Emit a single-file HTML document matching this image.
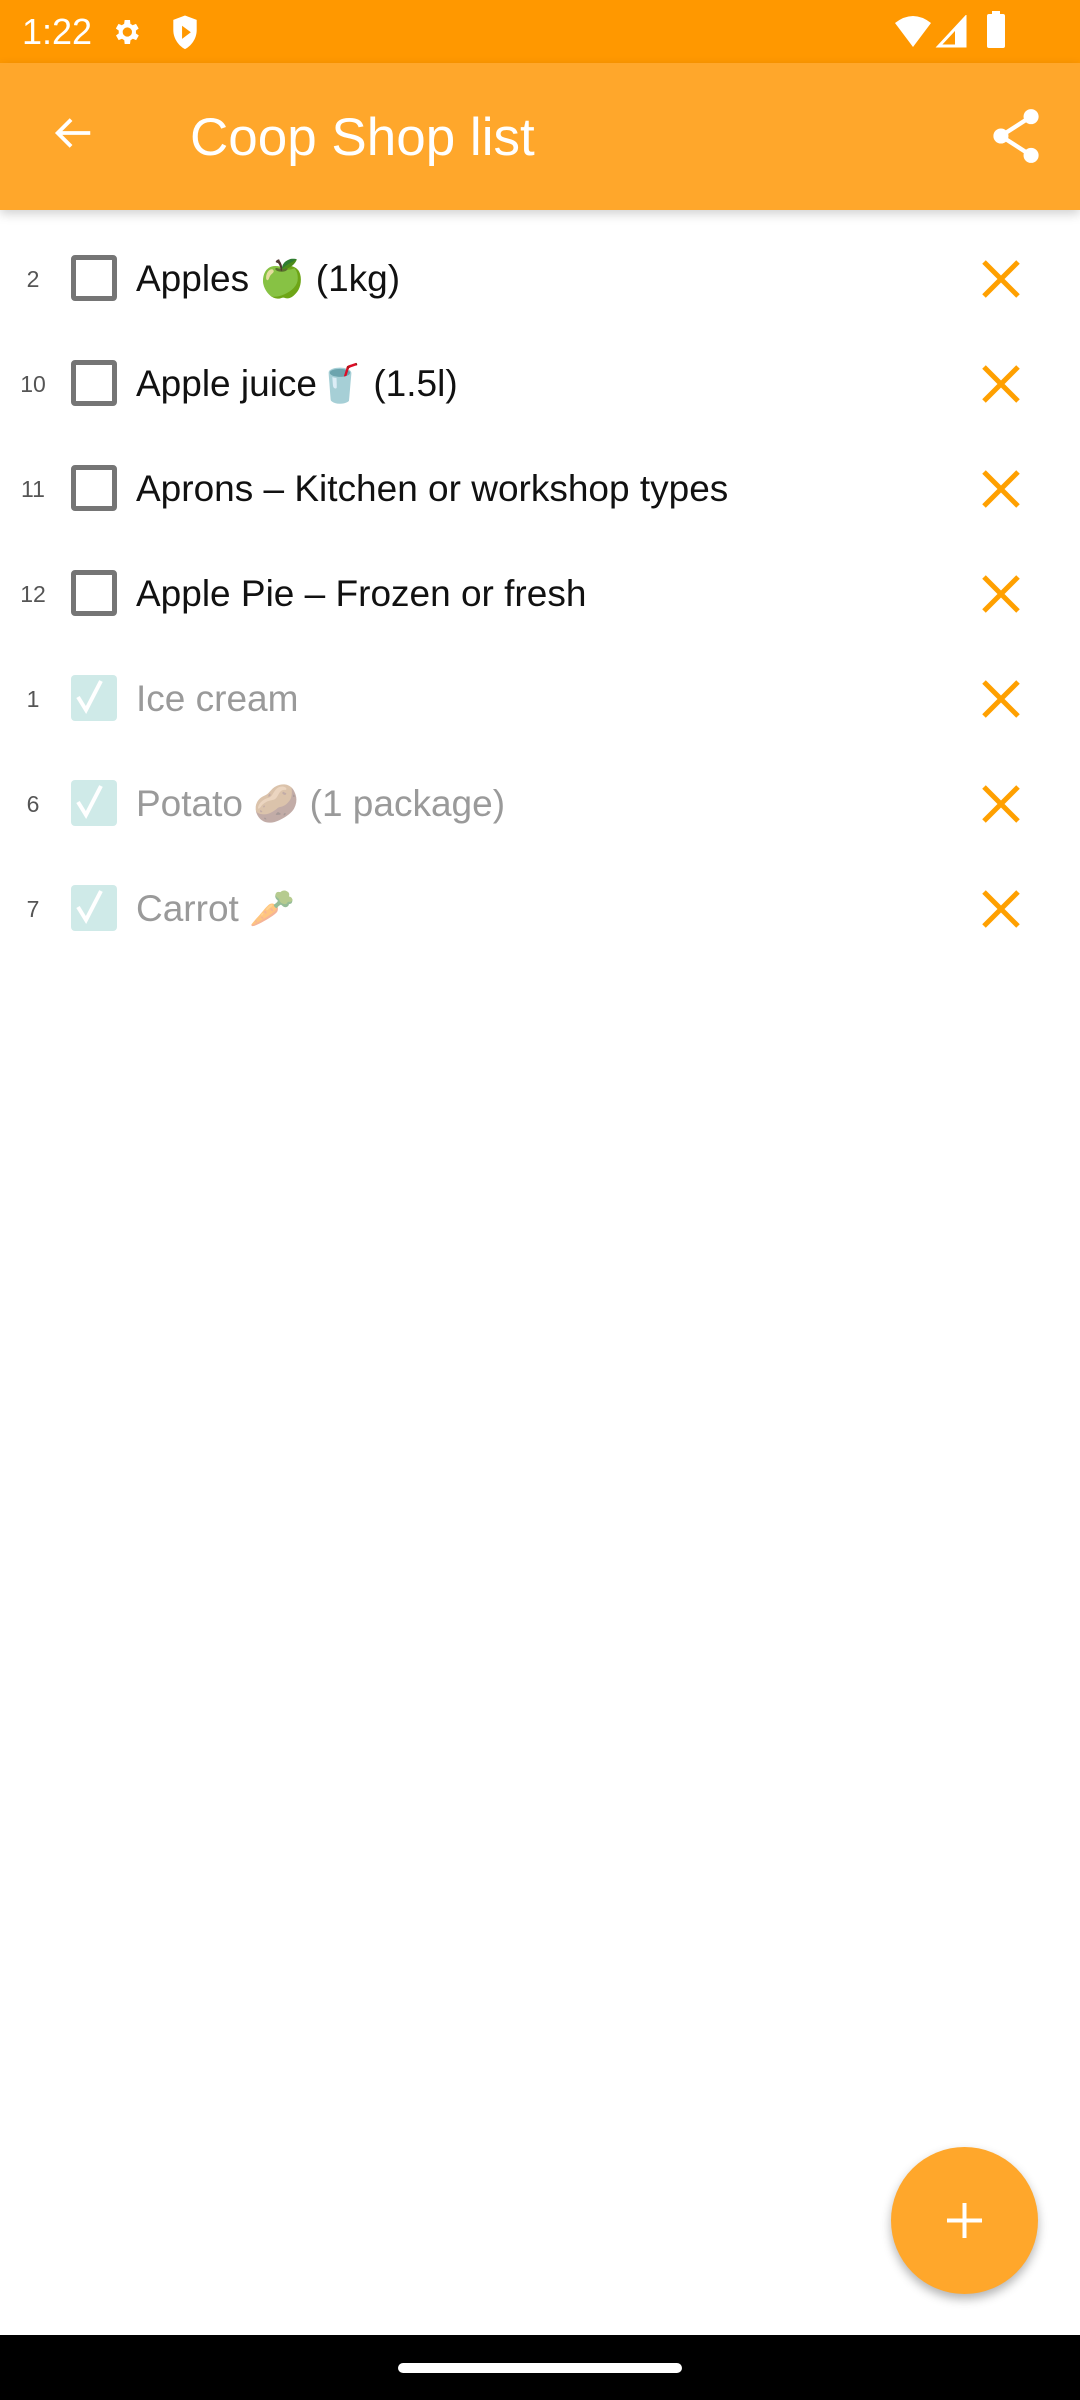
<!DOCTYPE html>
<html><head><meta charset="utf-8"><style>
*{margin:0;padding:0;box-sizing:border-box}
body{width:1080px;height:2400px;background:#fff;position:relative;overflow:hidden;font-family:"Liberation Sans","Noto Sans CJK JP",sans-serif}
.sb{position:absolute;left:0;top:0;width:1080px;height:63px;background:#FF9800;color:#fff}
.tb{position:absolute;left:0;top:63px;width:1080px;height:147px;background:#FFA72B;box-shadow:0 4px 10px rgba(0,0,0,.18);z-index:2}
.title{position:absolute;left:190px;top:48px;font-size:53px;color:#fff;line-height:1}
.row{position:absolute;left:0;width:1080px;height:105px}
.num{position:absolute;left:0;width:66px;text-align:center;top:41px;font-size:23px;color:#555}
.cb{position:absolute;left:71px;top:30px;width:46px;height:46px;border:5px solid #757575;border-radius:4px}
.cb.on{border:none;background:#CFEAE8;border-radius:4px}
.txt{position:absolute;left:136px;top:33px;font-size:37px;color:#111;white-space:nowrap}
.txt.done{color:#9a9a9a}
.x{position:absolute;left:981px;top:34px}
.nav{position:absolute;left:0;top:2335px;width:1080px;height:65px;background:#000}
.fab{position:absolute;left:891px;top:2147px;width:147px;height:147px;border-radius:50%;background:#FFA72B;box-shadow:0 5px 10px rgba(0,0,0,.3)}
</style></head><body>
<div class="sb">
<div style="position:absolute;left:22px;top:11px;font-size:36px">1:22</div>
<svg style="position:absolute;left:110px;top:16px" width="32" height="32" viewBox="0 0 24 24"><path fill="#fff" d="M19.4 13a7.5 7.5 0 000-2l2.1-1.6-2-3.5-2.5 1a7 7 0 00-1.7-1L15 3h-4l-.4 2.9a7 7 0 00-1.7 1l-2.5-1-2 3.5L6.6 11a7.5 7.5 0 000 2l-2.1 1.6 2 3.5 2.5-1a7 7 0 001.7 1L11 21h4l.4-2.9a7 7 0 001.7-1l2.5 1 2-3.5zM13 15.5A3.5 3.5 0 1113 8.5a3.5 3.5 0 010 7z"/></svg>
<svg style="position:absolute;left:170px;top:14px" width="30" height="38" viewBox="0 0 20 26"><path fill="#fff" d="M10 1L2 4v7c0 6 4 11 8 13 4-2 8-7 8-13V4z"/><path fill="#FF9800" d="M8 8v9l6-4.5z"/></svg>
<svg style="position:absolute;left:893px;top:15px" width="40" height="34" viewBox="0 0 40 34"><path fill="#fff" d="M2 8Q20-6 38 8L20 32z"/></svg>
<svg style="position:absolute;left:935px;top:15px" width="34" height="34" viewBox="0 0 34 34"><path fill="none" stroke="#fff" stroke-width="3" d="M30 3V31H4z"/><path fill="#fff" d="M30 3V31H20V14z"/></svg>
<div style="position:absolute;left:987px;top:14px;width:18px;height:34px;background:#fff;border-radius:2px"></div>
<div style="position:absolute;left:992px;top:11px;width:8px;height:4px;background:#fff"></div>
</div>
<div class="tb">
<svg style="position:absolute;left:50px;top:47px" width="46" height="46" viewBox="0 0 24 24"><path fill="none" stroke="#fff" stroke-width="2" d="M21 12H4M11 5l-7 7 7 7"/></svg>
<div class="title">Coop Shop list</div>
<svg style="position:absolute;left:990px;top:45px" width="52" height="56" viewBox="0 0 24 26"><g fill="#fff"><circle cx="19" cy="4" r="3.5"/><circle cx="5" cy="13" r="3.5"/><circle cx="19" cy="22" r="3.5"/></g><path fill="none" stroke="#fff" stroke-width="2" d="M19 4L5 13l14 9"/></svg>
</div>

<div class="row" style="top:225px"><div class="num">2</div><div class="cb"></div><div class="txt">Apples 🍏 (1kg)</div><svg class="x" width="40" height="40" viewBox="0 0 40 40"><path stroke="#FFA000" stroke-width="5" d="M3 3l34 34M37 3L3 37"/></svg></div>
<div class="row" style="top:330px"><div class="num">10</div><div class="cb"></div><div class="txt">Apple juice🥤 (1.5l)</div><svg class="x" width="40" height="40" viewBox="0 0 40 40"><path stroke="#FFA000" stroke-width="5" d="M3 3l34 34M37 3L3 37"/></svg></div>
<div class="row" style="top:435px"><div class="num">11</div><div class="cb"></div><div class="txt">Aprons – Kitchen or workshop types</div><svg class="x" width="40" height="40" viewBox="0 0 40 40"><path stroke="#FFA000" stroke-width="5" d="M3 3l34 34M37 3L3 37"/></svg></div>
<div class="row" style="top:540px"><div class="num">12</div><div class="cb"></div><div class="txt">Apple Pie – Frozen or fresh</div><svg class="x" width="40" height="40" viewBox="0 0 40 40"><path stroke="#FFA000" stroke-width="5" d="M3 3l34 34M37 3L3 37"/></svg></div>
<div class="row" style="top:645px"><div class="num">1</div><div class="cb on"><svg width="46" height="46" viewBox="0 0 46 46"><path fill="none" stroke="#fff" stroke-width="4" d="M7 22l8 13L30 6"/></svg></div><div class="txt done">Ice cream</div><svg class="x" width="40" height="40" viewBox="0 0 40 40"><path stroke="#FFA000" stroke-width="5" d="M3 3l34 34M37 3L3 37"/></svg></div>
<div class="row" style="top:750px"><div class="num">6</div><div class="cb on"><svg width="46" height="46" viewBox="0 0 46 46"><path fill="none" stroke="#fff" stroke-width="4" d="M7 22l8 13L30 6"/></svg></div><div class="txt done">Potato <span style="opacity:.5">🥔</span> (1 package)</div><svg class="x" width="40" height="40" viewBox="0 0 40 40"><path stroke="#FFA000" stroke-width="5" d="M3 3l34 34M37 3L3 37"/></svg></div>
<div class="row" style="top:855px"><div class="num">7</div><div class="cb on"><svg width="46" height="46" viewBox="0 0 46 46"><path fill="none" stroke="#fff" stroke-width="4" d="M7 22l8 13L30 6"/></svg></div><div class="txt done">Carrot <span style="opacity:.5">🥕</span></div><svg class="x" width="40" height="40" viewBox="0 0 40 40"><path stroke="#FFA000" stroke-width="5" d="M3 3l34 34M37 3L3 37"/></svg></div>

<div class="fab"><svg style="position:absolute;left:54px;top:54px" width="39" height="39" viewBox="0 0 39 39"><path stroke="#fff" stroke-width="4" d="M19.5 2v35M2 19.5h35"/></svg></div>
<div class="nav"><div style="position:absolute;left:398px;top:28px;width:284px;height:10px;border-radius:5px;background:#fff"></div></div>
</body></html>
